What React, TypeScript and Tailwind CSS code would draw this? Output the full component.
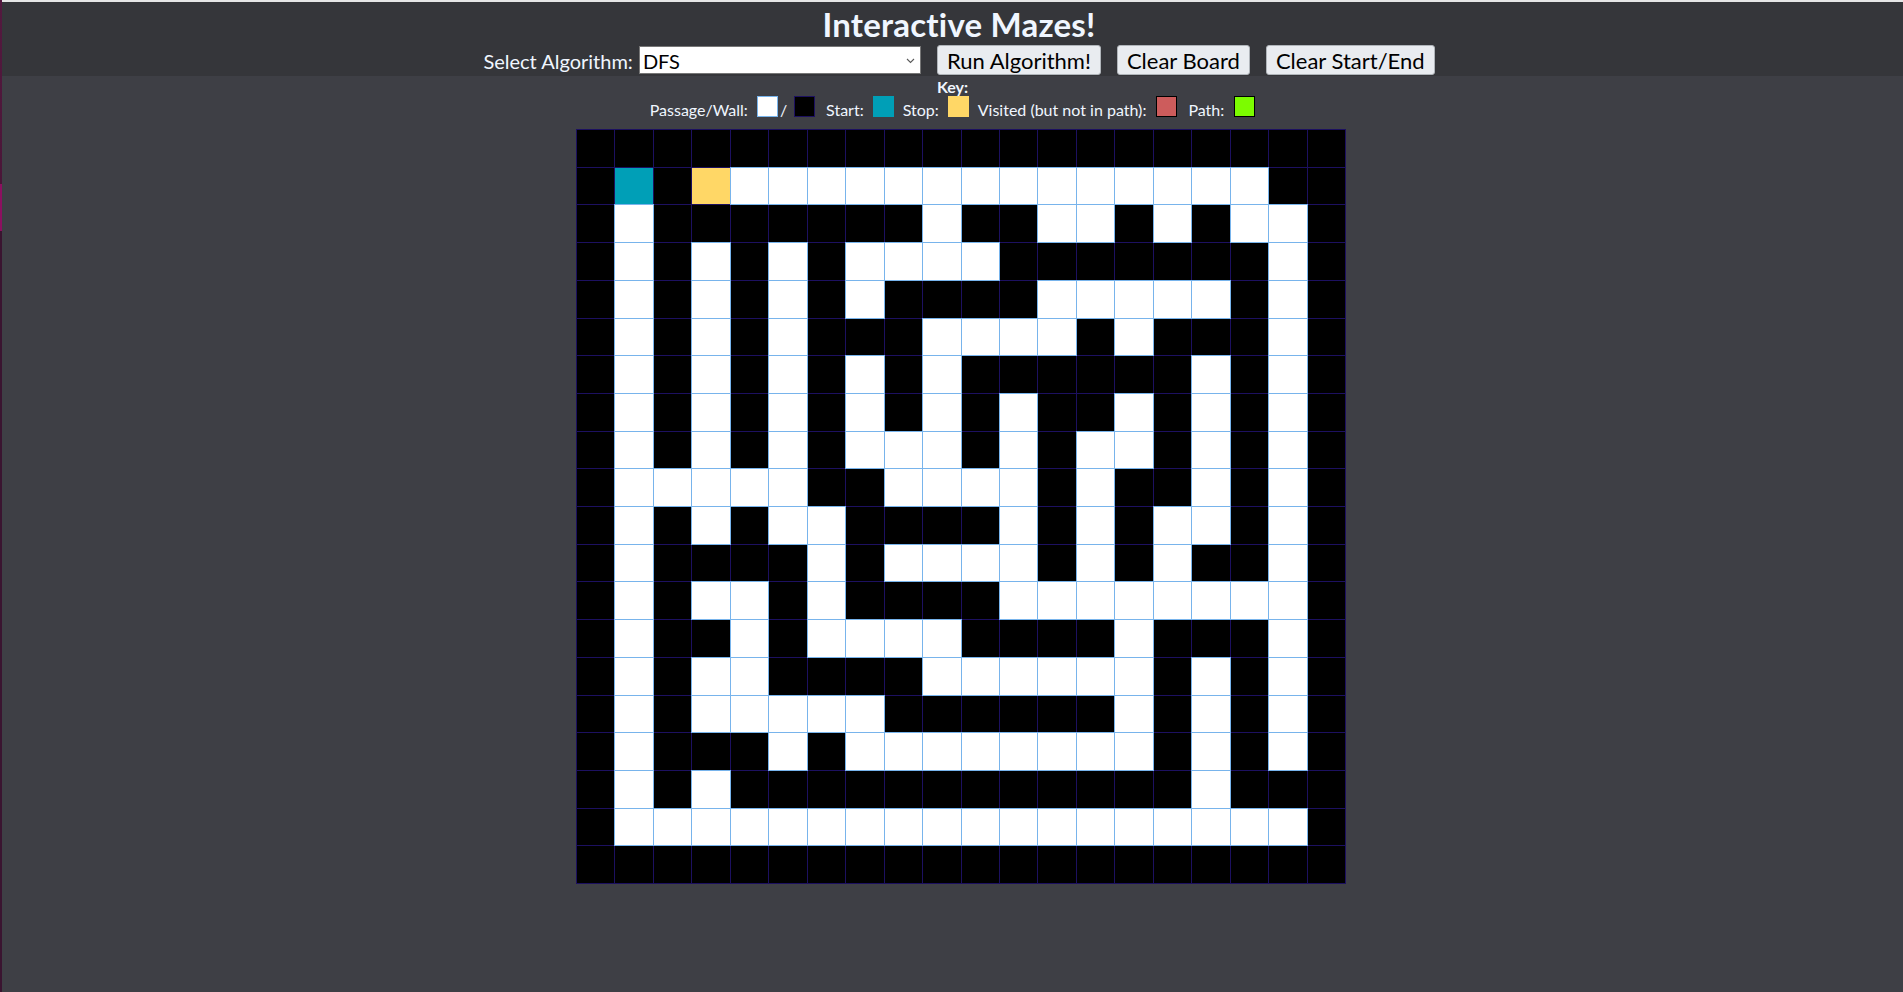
import React from "react";

const MAZE: string[] = [
  "BBBBBBBBBBBBBBBBBBBB",
  "BSBEWWWWWWWWWWWWWWBB",
  "BWBBBBBBBWBBWWBWBWWB",
  "BWBWBWBWWWWBBBBBBBWB",
  "BWBWBWBWBBBBWWWWWBWB",
  "BWBWBWBBBWWWWBWBBBWB",
  "BWBWBWBWBWBBBBBBWBWB",
  "BWBWBWBWBWBWBBWBWBWB",
  "BWBWBWBWWWBWBWWBWBWB",
  "BWWWWWBBWWWWBWBBWBWB",
  "BWBWBWWBBBBWBWBWWBWB",
  "BWBBBBWBWWWWBWBWBBWB",
  "BWBWWBWBBBBWWWWWWWWB",
  "BWBBWBWWWWBBBBWBBBWB",
  "BWBWWBBBBWWWWWWBWBWB",
  "BWBWWWWWBBBBBBWBWBWB",
  "BWBBBWBWWWWWWWWBWBWB",
  "BWBWBBBBBBBBBBBBWBBB",
  "BWWWWWWWWWWWWWWWWWWB",
  "BBBBBBBBBBBBBBBBBBBB",
];

function Cell({ t }: { t: string }) {
  if (t === "W")
    return <div className="bg-white outline outline-1 outline-[#78b4ec]" />;
  if (t === "S") return <div className="bg-[#009fb7]" />;
  if (t === "E") return <div className="bg-[#ffd766]" />;
  return <div className="bg-black" />;
}

function Swatch({ cls }: { cls: string }) {
  return <span className={"inline-block w-[21px] h-[21px] box-border border " + cls} />;
}

const btn =
  "ml-[16px] h-[30px] px-[9px] pt-[1px] bg-[#e9ecf0] border border-[#b0b5ba] rounded-[3px] text-[22px] leading-[26px] text-black";

export default function App() {
  return (
    <div className="flex min-h-screen w-full font-['Lato','Noto_Sans',sans-serif]">
      <div className="w-[2px] shrink-0 bg-[linear-gradient(to_bottom,#54193f_0px,#4a1638_184px,#8c1060_184px,#8c1060_231px,#3a1430_231px,#3a1430_100%)]" />
      <div className="flex-1 flex flex-col bg-[#3e3f45]">
        <div className="h-[2px] bg-[#e6e6e6]" />
        <header className="bg-[#35363a] h-[74px] flex flex-col items-center pl-[13px]">
          <h1 className="mt-[3px] text-[33px] leading-[38px] font-bold text-[#f0f6ff] tracking-[0.2px]">
            Interactive Mazes!
          </h1>
          <div className="mt-[2px] flex items-center h-[30px]">
            <label className="text-[20px] leading-[24px] pt-[2px] text-[#f0f6ff] mr-[6px]">
              Select Algorithm:
            </label>
            <div className="relative">
              <select
                defaultValue="DFS"
                className="appearance-none block w-[282px] h-[28px] bg-white border border-[#767676] text-[20px] leading-[24px] text-black pl-[3px] pt-[2px] outline-none"
              >
                <option>DFS</option>
                <option>BFS</option>
                <option>A*</option>
                <option>Dijkstra</option>
              </select>
              <svg
                className="absolute right-[6px] top-[12px] pointer-events-none"
                width="9"
                height="6"
                viewBox="0 0 9 6"
              >
                <path d="M1 1 L4.5 4.5 L8 1" fill="none" stroke="#5a5a5a" strokeWidth="1.1" />
              </svg>
            </div>
            <button className={btn}>Run Algorithm!</button>
            <button className={btn}>Clear Board</button>
            <button className={btn}>Clear Start/End</button>
          </div>
        </header>
        <main className="flex flex-col items-center pb-[40px]">
          <div className="mt-[2px] text-[16px] leading-[18px] font-bold text-[#f0f6ff]">Key:</div>
          <div className="flex items-center h-[24px] text-[16px] leading-[20px] text-[#f0f6ff]">
            <span className="pt-[3px]">Passage/Wall:</span>
            <span className="ml-[9px]">
              <Swatch cls="bg-white border-[#78b4ec]" />
            </span>
            <span className="ml-[2px] pt-[3px]">/</span>
            <span className="ml-[7px]">
              <Swatch cls="bg-black border-[#1c1060]" />
            </span>
            <span className="ml-[11px] pt-[3px]">Start:</span>
            <span className="ml-[9px]">
              <Swatch cls="bg-[#009fb7] border-[#009fb7]" />
            </span>
            <span className="ml-[9px] pt-[3px]">Stop:</span>
            <span className="ml-[9px]">
              <Swatch cls="bg-[#ffd766] border-[#ffd766]" />
            </span>
            <span className="ml-[9px] pt-[3px]">Visited (but not in path):</span>
            <span className="ml-[10px]">
              <Swatch cls="bg-[#cd5c5c] border-black" />
            </span>
            <span className="ml-[11px] pt-[3px]">Path:</span>
            <span className="ml-[10px]">
              <Swatch cls="bg-[#7cfc00] border-black" />
            </span>
          </div>
          <div className="mt-[9px] ml-[17px] w-[770px] h-[755px] border border-[#1c1060] bg-[#1c1060] grid grid-cols-[repeat(20,minmax(0,1fr))] grid-rows-[repeat(20,minmax(0,1fr))] gap-px">
            {MAZE.map((row, r) =>
              row.split("").map((t, c) => <Cell key={r + "-" + c} t={t} />)
            )}
          </div>
        </main>
      </div>
    </div>
  );
}
